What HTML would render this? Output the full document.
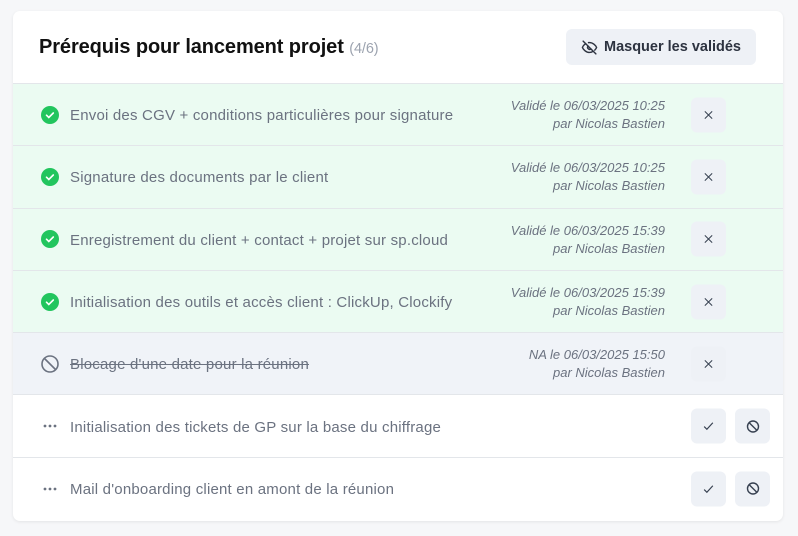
<!DOCTYPE html>
<html><head><meta charset="utf-8"><style>
*{box-sizing:border-box;margin:0;padding:0}
body{width:798px;height:536px;background:#f6f7f9;font-family:"Liberation Sans",sans-serif;position:relative;overflow:hidden}
.card{position:absolute;left:13px;top:11px;width:770px;height:510px;background:#fff;border-radius:7px;box-shadow:0 1px 3px rgba(0,0,0,.08);overflow:hidden}
.hd{height:73px;border-bottom:1px solid #e3e6ea;position:relative}
.hd h1{position:absolute;left:26px;top:25px;font-size:20px;font-weight:bold;color:#111;letter-spacing:-.1px}
.hd h1 span{font-size:14.5px;font-weight:normal;color:#9ca3af}
.mb{position:absolute;left:553px;top:18px;width:190px;height:36px;background:#eef1f6;border-radius:6px;font-size:14.5px;font-weight:bold;color:#2d3340;display:flex;align-items:center;justify-content:center;gap:6px}
.row{height:62.3px;border-bottom:1px solid #e3e6ea;position:relative;display:flex;align-items:center}
.row:last-child{border-bottom:none}
.g{background:#ebfbf2}.n{background:#f0f3f8}
.ic{position:absolute;left:28px;top:50%;transform:translateY(-50%);width:18px;height:18px}
.t{position:absolute;left:57px;font-size:15px;color:#6b7280;margin-top:2px;letter-spacing:.2px}
.s{text-decoration:line-through}
.m{position:absolute;right:118px;text-align:right;font-size:13px;font-style:italic;color:#6b7280;line-height:18px;margin-top:1px}
.b{position:absolute;width:35px;height:35px;background:#eef1f6;border-radius:6px;display:flex;align-items:center;justify-content:center;top:50%;transform:translateY(-50%)}
.b1{left:678px}.b2{left:722px}
</style></head><body>
<div class="card">
<div class="hd"><h1>Prérequis pour lancement projet <span>(4/6)</span></h1>
<div class="mb"><svg width="17" height="17" viewBox="0 0 24 24" fill="none" stroke="#2d3340" stroke-width="2" stroke-linecap="round"><path d="M3 3l18 18"/><path d="M10.6 5.1A10 10 0 0 1 12 5c5 0 9 4.5 10 7-.4 1-1.3 2.4-2.6 3.7M6.6 6.6C4.3 8 2.7 10.2 2 12c1 2.5 5 7 10 7 1.9 0 3.6-.6 5-1.6"/><path d="M9.9 9.9a3 3 0 0 0 4.2 4.2"/></svg>Masquer les validés</div></div>
<div class="row g"><svg class="ic" viewBox="0 0 18 18"><circle cx="9" cy="9" r="9" fill="#22c55e"/><path d="M5.5 9.2l2.3 2.3 4.5-4.5" stroke="#fff" stroke-width="1.6" fill="none" stroke-linecap="round"/></svg><div class="t">Envoi des CGV + conditions particulières pour signature</div><div class="m">Validé le 06/03/2025 10:25<br>par Nicolas Bastien</div><div class="b b1"><svg width="11" height="11" viewBox="0 0 12 12" stroke="#374151" stroke-width="1.1"><path d="M2 2l8 8M10 2l-8 8"/></svg></div></div>
<div class="row g"><svg class="ic" viewBox="0 0 18 18"><circle cx="9" cy="9" r="9" fill="#22c55e"/><path d="M5.5 9.2l2.3 2.3 4.5-4.5" stroke="#fff" stroke-width="1.6" fill="none" stroke-linecap="round"/></svg><div class="t">Signature des documents par le client</div><div class="m">Validé le 06/03/2025 10:25<br>par Nicolas Bastien</div><div class="b b1"><svg width="11" height="11" viewBox="0 0 12 12" stroke="#374151" stroke-width="1.1"><path d="M2 2l8 8M10 2l-8 8"/></svg></div></div>
<div class="row g"><svg class="ic" viewBox="0 0 18 18"><circle cx="9" cy="9" r="9" fill="#22c55e"/><path d="M5.5 9.2l2.3 2.3 4.5-4.5" stroke="#fff" stroke-width="1.6" fill="none" stroke-linecap="round"/></svg><div class="t">Enregistrement du client + contact + projet sur sp.cloud</div><div class="m">Validé le 06/03/2025 15:39<br>par Nicolas Bastien</div><div class="b b1"><svg width="11" height="11" viewBox="0 0 12 12" stroke="#374151" stroke-width="1.1"><path d="M2 2l8 8M10 2l-8 8"/></svg></div></div>
<div class="row g"><svg class="ic" viewBox="0 0 18 18"><circle cx="9" cy="9" r="9" fill="#22c55e"/><path d="M5.5 9.2l2.3 2.3 4.5-4.5" stroke="#fff" stroke-width="1.6" fill="none" stroke-linecap="round"/></svg><div class="t">Initialisation des outils et accès client : ClickUp, Clockify</div><div class="m">Validé le 06/03/2025 15:39<br>par Nicolas Bastien</div><div class="b b1"><svg width="11" height="11" viewBox="0 0 12 12" stroke="#374151" stroke-width="1.1"><path d="M2 2l8 8M10 2l-8 8"/></svg></div></div>
<div class="row n"><svg class="ic" viewBox="0 0 18 18" fill="none" stroke="#6b7280" stroke-width="1.6"><circle cx="9" cy="9" r="8"/><path d="M3.5 3.5l11 11"/></svg><div class="t s">Blocage d'une date pour la réunion</div><div class="m">NA le 06/03/2025 15:50<br>par Nicolas Bastien</div><div class="b b1"><svg width="11" height="11" viewBox="0 0 12 12" stroke="#374151" stroke-width="1.1"><path d="M2 2l8 8M10 2l-8 8"/></svg></div></div>
<div class="row"><svg class="ic" viewBox="0 0 18 18" fill="#6b7280"><circle cx="4" cy="9" r="1.4"/><circle cx="9" cy="9" r="1.4"/><circle cx="14" cy="9" r="1.4"/></svg><div class="t">Initialisation des tickets de GP sur la base du chiffrage</div><div class="b b1"><svg width="13" height="13" viewBox="0 0 12 12" fill="none" stroke="#374151" stroke-width="1.1"><path d="M2 6.5l2.5 2.5L10 3"/></svg></div><div class="b b2"><svg width="14" height="14" viewBox="0 0 14 14" fill="none" stroke="#374151" stroke-width="1.4"><circle cx="7" cy="7" r="5.5"/><path d="M3.2 3.2l7.6 7.6"/></svg></div></div>
<div class="row"><svg class="ic" viewBox="0 0 18 18" fill="#6b7280"><circle cx="4" cy="9" r="1.4"/><circle cx="9" cy="9" r="1.4"/><circle cx="14" cy="9" r="1.4"/></svg><div class="t">Mail d'onboarding client en amont de la réunion</div><div class="b b1"><svg width="13" height="13" viewBox="0 0 12 12" fill="none" stroke="#374151" stroke-width="1.1"><path d="M2 6.5l2.5 2.5L10 3"/></svg></div><div class="b b2"><svg width="14" height="14" viewBox="0 0 14 14" fill="none" stroke="#374151" stroke-width="1.4"><circle cx="7" cy="7" r="5.5"/><path d="M3.2 3.2l7.6 7.6"/></svg></div></div>
</div>
</body></html>
